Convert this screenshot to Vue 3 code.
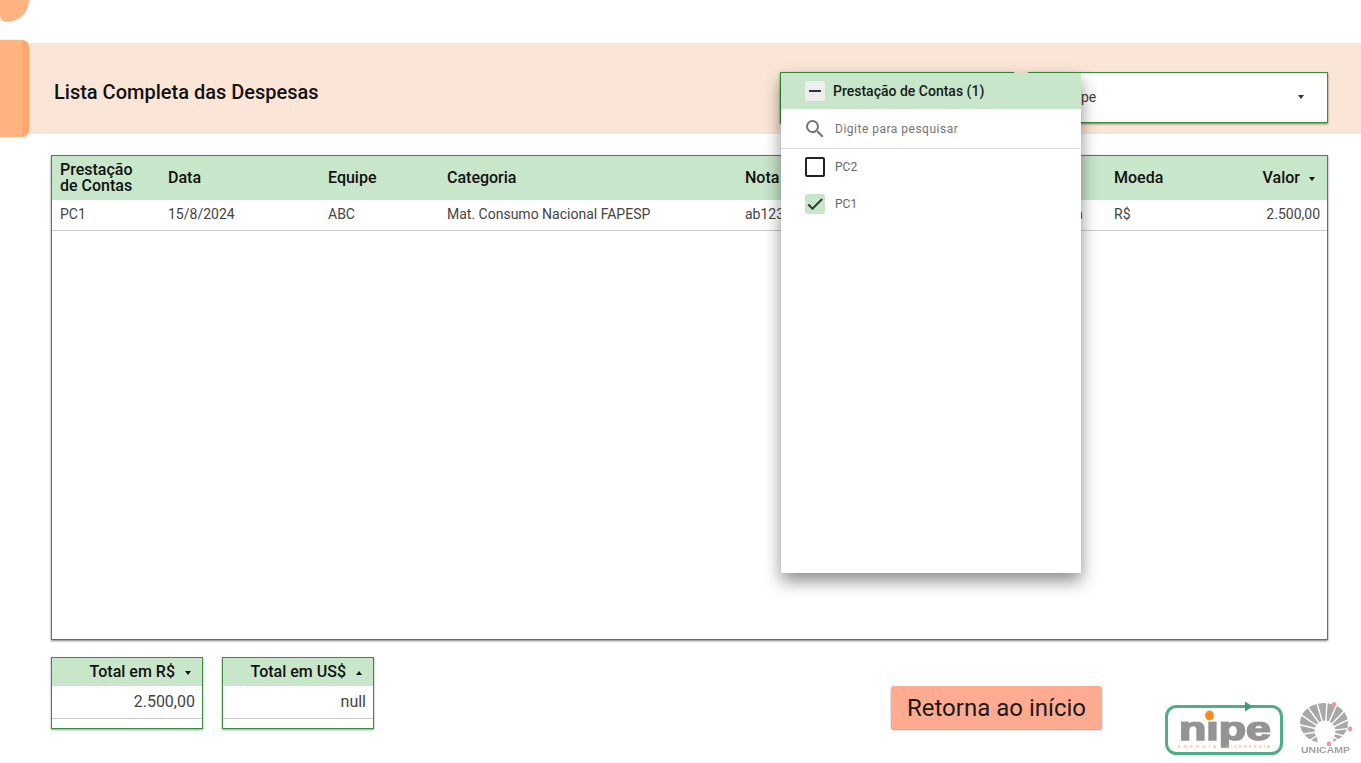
<template>
  <div class="page">
    <div class="blob"></div>
    <div class="tab"></div>

    <header class="banner">
      <h1>Lista Completa das Despesas</h1>
      <div class="filters">
        <div class="filter first"></div>
        <div class="filter second">
          <span>Equipe</span>
          <i class="arrow down"></i>
        </div>
      </div>
    </header>

    <section class="table">
      <div class="row head">
        <div v-for="col in columns" :key="col.label" class="cell" :class="{ right: col.right }">
          <span>{{ col.label }}</span>
          <i v-if="col.right" class="arrow down sort"></i>
        </div>
      </div>
      <div class="row body">
        <div v-for="col in columns" :key="col.label" class="cell" :class="{ right: col.right }">{{ col.value }}</div>
      </div>
    </section>

    <footer class="bottom">
      <div class="card">
        <div class="card-head">Total em R$<i class="arrow down dark"></i></div>
        <div class="card-value">2.500,00</div>
      </div>
      <div class="card">
        <div class="card-head">Total em US$<i class="arrow up dark"></i></div>
        <div class="card-value">null</div>
      </div>
      <button class="back">Retorna ao início</button>
      <svg class="nipe" width="120" height="56" viewBox="0 0 120 56">
        <defs>
          <clipPath id="nipe-clip">
            <rect x="0" y="20.5" width="120" height="30" />
          </clipPath>
        </defs>
        <rect x="2.5" y="5.5" width="115" height="47" rx="10" fill="none" stroke="#4fae84" stroke-width="3" />
        <path d="M81 0.5 L89 5.5 L81 10.5 Z" fill="#3f9e74" />
        <text x="15" y="39" class="nipe-word" textLength="92" lengthAdjust="spacingAndGlyphs" clip-path="url(#nipe-clip)">nipe</text>
        <ellipse cx="45.5" cy="14.5" rx="4.4" ry="5" fill="#f78d1e" />
        <text x="14" y="46.5" class="nipe-sub" textLength="38">ENERGIA</text>
        <text x="62" y="46.5" class="nipe-sub" textLength="44">BIOENERGIA</text>
      </svg>
      <svg class="unicamp" width="54" height="56" viewBox="0 0 54 56">
        <ellipse cx="24" cy="22" rx="24" ry="20" fill="#a8a8a8" />
        <line v-for="a in spokes" :key="a" x1="25" y1="30" :x2="25 + 34 * Math.cos(a)" :y2="30 + 34 * Math.sin(a)" stroke="#fff" stroke-width="1.4" />
        <circle cx="25" cy="30" r="10.5" fill="#fff" />
        <path d="M17 36 L25 30 L34 37 L31 46 L18 46 Z" fill="#fff" />
        <circle cx="34" cy="3.5" r="2.4" fill="#ee9aa6" />
        <circle cx="50" cy="28" r="2.4" fill="#ee9aa6" />
        <circle cx="29" cy="43" r="2.4" fill="#ee9aa6" />
        <text x="1" y="52" class="unicamp-word" textLength="49" lengthAdjust="spacingAndGlyphs">UNICAMP</text>
      </svg>
    </footer>

    <div class="dropdown">
      <div class="dd-head">
        <span class="box minus"><b></b></span>
        <span>Prestação de Contas (1)</span>
      </div>
      <div class="dd-search">
        <svg width="24" height="24" viewBox="0 0 24 24">
          <path fill="#757575" d="M15.5 14h-.79l-.28-.27A6.47 6.47 0 0 0 16 9.5 6.5 6.5 0 1 0 9.5 16c1.61 0 3.09-.59 4.23-1.57l.27.28v.79l5 4.99L20.49 19l-4.99-5zm-6 0C7.01 14 5 11.99 5 9.5S7.01 5 9.5 5 14 7.01 14 9.5 11.99 14 9.5 14z" />
        </svg>
        <span>Digite para pesquisar</span>
      </div>
      <div class="dd-list">
        <div class="dd-item">
          <span class="box empty"></span>
          <span>PC2</span>
        </div>
        <div class="dd-item">
          <span class="box checked">
            <svg width="20" height="20" viewBox="0 0 24 24">
              <path fill="#333" stroke="#333" stroke-width="0.7" d="M9 16.2 4.8 12l-1.4 1.4L9 19 21 7l-1.4-1.4L9 16.2z" />
            </svg>
          </span>
          <span>PC1</span>
        </div>
      </div>
    </div>
  </div>
</template>

<script setup>
const columns = [
  { label: 'Prestação de Contas', value: 'PC1' },
  { label: 'Data', value: '15/8/2024' },
  { label: 'Equipe', value: 'ABC' },
  { label: 'Categoria', value: 'Mat. Consumo Nacional FAPESP' },
  { label: 'Nota Fiscal', value: 'ab1234' },
  { label: 'Fonte', value: 'Empresa' },
  { label: 'Moeda', value: 'R$' },
  { label: 'Valor', value: '2.500,00', right: true }
]

// raios do logo, em radianos, saindo do centro do furo
const spokes = [-2.9, -2.55, -2.2, -1.85, -1.5, -1.15, -0.8, -0.45, -0.1, 0.25, 0.6, 2.6, 3.0]
</script>

<style>
body {
  background: #fff;
  overflow: hidden;
}
</style>

<style scoped>
.page {
  position: relative;
  width: 1361px;
  height: 763px;
  overflow: hidden;
  padding-top: 43px;
  box-sizing: border-box;
  font-family: Roboto, "Liberation Sans", sans-serif;
  color: #333;
}

.blob {
  position: absolute;
  left: 0;
  top: 0;
  width: 29px;
  height: 22px;
  background: #ffb380;
  border-radius: 0 0 22px 6px;
}

.tab {
  position: absolute;
  left: 0;
  top: 40px;
  width: 22px;
  height: 97px;
  background: #ffb380;
  border-right: 7px solid #ffa76e;
  border-radius: 0 7px 7px 0;
  z-index: 1;
}

.banner {
  display: flex;
  height: 91px;
  background: #fbe5d6;
  padding-left: 54px;
  padding-right: 33px;
}

.banner h1 {
  margin: 37px 0 0;
  font-size: 20px;
  line-height: 24px;
  font-weight: 500;
  color: #111;
}

.filters {
  display: flex;
  gap: 14px;
  margin: 29px 0 0 auto;
}

.filter {
  box-sizing: border-box;
  height: 51px;
  background: #fff;
  border: 1px solid #388e3c;
  box-shadow: 0 1px 2px rgba(0, 0, 0, 0.5);
  display: flex;
  align-items: center;
  font-size: 14px;
  color: #444;
}

.filter.first {
  width: 234px;
}

.filter.second {
  width: 300px;
  padding: 0 23px 1px 25px;
  justify-content: space-between;
}

.arrow {
  display: inline-block;
  width: 0;
  height: 0;
  border-left: 3.5px solid transparent;
  border-right: 3.5px solid transparent;
}

.arrow.down {
  border-top: 4px solid #333;
}

.arrow.up {
  border-bottom: 4px solid #111;
}

.arrow.down.dark,
.arrow.down.sort {
  border-top-color: #111;
}

.arrow.dark {
  margin-left: 10px;
  vertical-align: middle;
}

.arrow.sort {
  margin: 0 4px 0 9px;
  vertical-align: middle;
}

.table {
  box-sizing: border-box;
  width: 1277px;
  height: 485px;
  margin: 21px 0 0 51px;
  border: 1px solid #388e3c;
  box-shadow: 0 1px 2px rgba(0, 0, 0, 0.5);
}

.row {
  display: grid;
  grid-template-columns: 108px 160px 119px 298px 283px 86px 114px 1fr;
  align-items: center;
}

.row.head {
  height: 44px;
  background: #c8e6c9;
  font-size: 16px;
  line-height: 16px;
  font-weight: 500;
  color: #111;
}

.row.body {
  height: 31px;
  box-sizing: border-box;
  padding-bottom: 2px;
  border-bottom: 1px solid #ccc;
  font-size: 14px;
  color: #444;
}

.cell {
  padding: 0 8px;
  white-space: nowrap;
}

.body .cell.right {
  padding-right: 7px;
}

.head .cell:first-child {
  white-space: normal;
}

.cell.right {
  text-align: right;
}

.bottom {
  display: flex;
  align-items: flex-start;
  margin: 17px 0 0 51px;
}

.card {
  box-sizing: border-box;
  width: 152px;
  height: 72px;
  margin-right: 19px;
  border: 1px solid #388e3c;
  box-shadow: 0 1px 2px rgba(0, 0, 0, 0.4);
}

.card-head {
  height: 28px;
  line-height: 28px;
  background: #c8e6c9;
  text-align: right;
  padding-right: 11px;
  font-size: 16px;
  font-weight: 500;
  color: #111;
}

.card-value {
  box-sizing: border-box;
  height: 33px;
  line-height: 31px;
  border-bottom: 1px solid #ccc;
  text-align: right;
  padding-right: 7px;
  font-size: 16px;
  color: #444;
}

.back {
  box-sizing: border-box;
  width: 211px;
  height: 43px;
  margin: 29px 0 0 498px;
  border: none;
  border-radius: 3px;
  background: #ffab91;
  box-shadow: 0 1px 2px rgba(0, 0, 0, 0.4);
  font-family: inherit;
  font-size: 24px;
  color: #1a1a1a;
  padding: 0;
}

.nipe {
  margin: 44px 0 0 62px;
  filter: blur(0.6px);
}

.nipe-word {
  font-family: "Liberation Sans", sans-serif;
  font-size: 34px;
  font-weight: 700;
  fill: #949494;
  stroke: #949494;
  stroke-width: 1.6px;
}

.nipe-sub {
  font-family: "Liberation Sans", sans-serif;
  font-size: 4px;
  fill: #f5a25d;
}

.unicamp {
  margin: 44px 0 0 16px;
  filter: blur(0.5px);
}

.unicamp-word {
  font-family: "Liberation Sans", sans-serif;
  font-size: 9px;
  font-weight: 700;
  fill: #a0a0a0;
}

.dropdown {
  position: absolute;
  left: 781px;
  top: 73px;
  width: 300px;
  height: 500px;
  background: #fff;
  box-shadow: 0 8px 16px rgba(0, 0, 0, 0.45);
  z-index: 2;
}

.dd-head {
  display: flex;
  align-items: center;
  gap: 8px;
  height: 36px;
  padding-left: 24px;
  background: #c8e6c9;
  font-size: 14px;
  font-weight: 500;
  color: #1a1a1a;
}

.dd-search {
  display: flex;
  align-items: center;
  gap: 8px;
  height: 40px;
  box-sizing: border-box;
  padding-left: 22px;
  border-bottom: 1px solid #ddd;
  font-size: 12px;
  color: #757575;
}

.dd-search span {
  letter-spacing: 0.5px;
}

.dd-list {
  display: flex;
  flex-direction: column;
  gap: 17px;
  padding: 8px 0 0 24px;
}

.dd-item {
  display: flex;
  align-items: center;
  gap: 10px;
  height: 20px;
  font-size: 12px;
  color: #666;
}

.box {
  box-sizing: border-box;
  width: 20px;
  height: 20px;
  border-radius: 2px;
  display: flex;
  align-items: center;
  justify-content: center;
  flex: none;
}

.box.minus {
  background: #eee;
}

.box.minus b {
  width: 12px;
  height: 2px;
  background: #333;
}

.box.empty {
  border: 2px solid #222;
}

.box.checked {
  background: #c8e6c9;
}
</style>
